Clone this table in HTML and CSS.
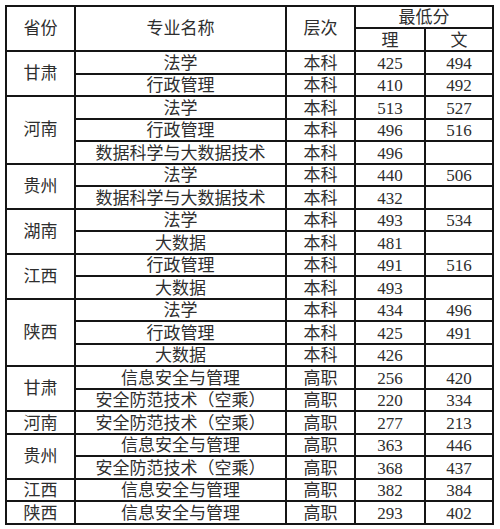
FILE: index.html
```html
<!DOCTYPE html>
<html lang="zh">
<head>
<meta charset="utf-8">
<link rel="stylesheet" href="styles.css">
</head>
<body>
<table class="scores">
<colgroup>
<col class="c-prov"><col class="c-major"><col class="c-level"><col class="c-li"><col class="c-wen">
</colgroup>
<thead>
<tr class="h1"><th rowspan="2">省份</th><th rowspan="2">专业名称</th><th rowspan="2">层次</th><th colspan="2">最低分</th></tr>
<tr class="h2"><th>理</th><th>文</th></tr>
</thead>
<tbody>
<tr><td rowspan="2">甘肃</td><td>法学</td><td>本科</td><td class="n">425</td><td class="n">494</td></tr>
<tr><td>行政管理</td><td>本科</td><td class="n">410</td><td class="n">492</td></tr>
<tr><td rowspan="3">河南</td><td>法学</td><td>本科</td><td class="n">513</td><td class="n">527</td></tr>
<tr><td>行政管理</td><td>本科</td><td class="n">496</td><td class="n">516</td></tr>
<tr><td>数据科学与大数据技术</td><td>本科</td><td class="n">496</td><td class="n"></td></tr>
<tr><td rowspan="2">贵州</td><td>法学</td><td>本科</td><td class="n">440</td><td class="n">506</td></tr>
<tr><td>数据科学与大数据技术</td><td>本科</td><td class="n">432</td><td class="n"></td></tr>
<tr><td rowspan="2">湖南</td><td>法学</td><td>本科</td><td class="n">493</td><td class="n">534</td></tr>
<tr><td>大数据</td><td>本科</td><td class="n">481</td><td class="n"></td></tr>
<tr><td rowspan="2">江西</td><td>行政管理</td><td>本科</td><td class="n">491</td><td class="n">516</td></tr>
<tr><td>大数据</td><td>本科</td><td class="n">493</td><td class="n"></td></tr>
<tr><td rowspan="3">陕西</td><td>法学</td><td>本科</td><td class="n">434</td><td class="n">496</td></tr>
<tr><td>行政管理</td><td>本科</td><td class="n">425</td><td class="n">491</td></tr>
<tr><td>大数据</td><td>本科</td><td class="n">426</td><td class="n"></td></tr>
<tr><td rowspan="2">甘肃</td><td>信息安全与管理</td><td>高职</td><td class="n">256</td><td class="n">420</td></tr>
<tr><td>安全防范技术（空乘）</td><td>高职</td><td class="n">220</td><td class="n">334</td></tr>
<tr><td>河南</td><td>安全防范技术（空乘）</td><td>高职</td><td class="n">277</td><td class="n">213</td></tr>
<tr><td rowspan="2">贵州</td><td>信息安全与管理</td><td>高职</td><td class="n">363</td><td class="n">446</td></tr>
<tr><td>安全防范技术（空乘）</td><td>高职</td><td class="n">368</td><td class="n">437</td></tr>
<tr><td>江西</td><td>信息安全与管理</td><td>高职</td><td class="n">382</td><td class="n">384</td></tr>
<tr><td>陕西</td><td>信息安全与管理</td><td>高职</td><td class="n">293</td><td class="n">402</td></tr>
</tbody>
</table>
</body>
</html>
```
FILE: styles.css
```css
html, body {
  margin: 0;
  padding: 0;
  background: #fff;
}
body {
  padding: 5px 0 0 5px;
}
.scores {
  border-collapse: collapse;
  table-layout: fixed;
  width: 487px;
  font-family: "Liberation Serif", "Noto Sans CJK SC", serif;
  font-size: 17px;
  color: #2e2e2e;
}
.c-prov { width: 69px; }
.c-major { width: 211px; }
.c-level { width: 69px; }
.c-li { width: 70px; }
.c-wen { width: 68px; }
.scores th, .scores td {
  border: 2px solid #151515;
  padding: 0;
  text-align: center;
  font-weight: normal;
  line-height: 19px;
  vertical-align: bottom;
}
.scores th[rowspan], .scores td[rowspan] {
  vertical-align: middle;
}
.scores tr.h1 { height: 22px; }
.scores tr.h2 { height: 23px; }
.scores tbody tr { height: 22.5px; }
```
